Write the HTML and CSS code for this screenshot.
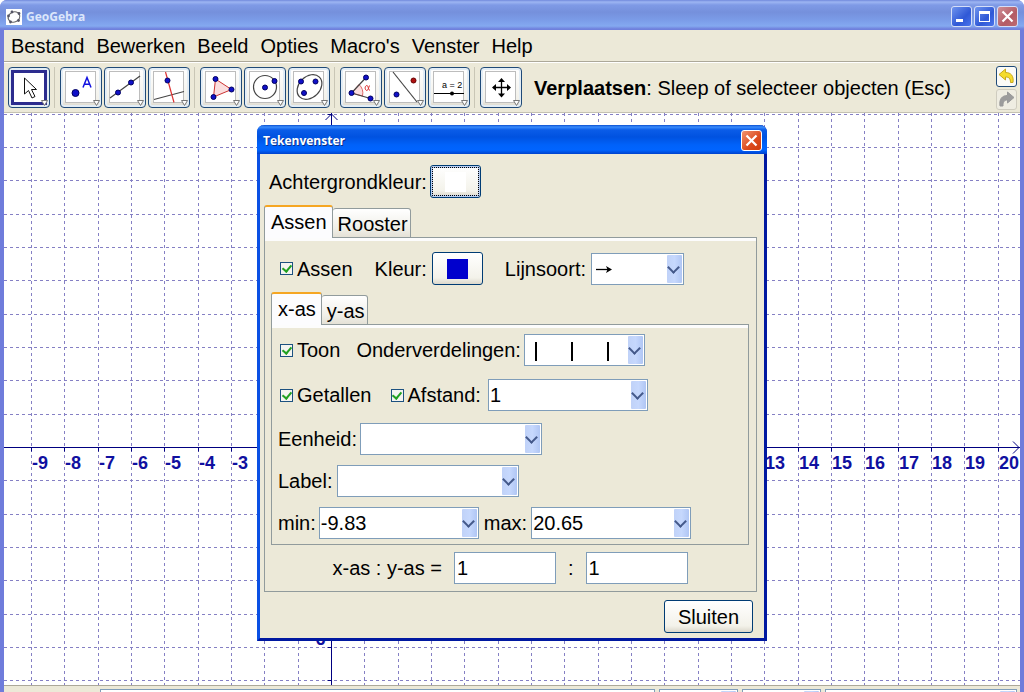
FILE: index.html
```html
<!DOCTYPE html>
<html lang="nl">
<head>
<meta charset="utf-8">
<title>GeoGebra</title>
<link rel="stylesheet" href="styles.css">
</head>
<body>
<div class="window">
  <header class="titlebar">
    <svg class="logo" width="16" height="16" viewBox="0 0 16 16"><rect width="16" height="16" fill="#fff"/><ellipse cx="8" cy="8" rx="6" ry="5" fill="none" stroke="#666" stroke-width="1.1" transform="rotate(-25 8 8)"/><g fill="#556"><circle cx="6" cy="3" r="1.4"/><circle cx="13" cy="4.500" r="1.4"/><circle cx="2.500" cy="7" r="1.4"/><circle cx="4.500" cy="13" r="1.4"/><circle cx="12.500" cy="11.500" r="1.4"/></g></svg>
    <h1 class="title">GeoGebra</h1>
    <div class="winbuttons">
      <button class="winbtn" aria-label="Minimaliseren"><svg width="19" height="19" viewBox="0 0 19 19"><path d="M4 12h7v3H4z" fill="#fff"/></svg></button>
      <button class="winbtn" aria-label="Maximaliseren"><svg width="19" height="19" viewBox="0 0 19 19"><path d="M4 4h11v11H4zM5 7v7h9V7z" fill="#fff" fill-rule="evenodd"/></svg></button>
      <button class="winbtn winbtn-dim" aria-label="Sluiten"><svg width="19" height="19" viewBox="0 0 19 19"><path d="M4.500 4.500l10 10M14.500 4.500l-10 10" stroke="#fff" stroke-width="2.200"/></svg></button>
    </div>
  </header>
  <div class="body">
    <nav class="menubar">
      <button>Bestand</button><button>Bewerken</button><button>Beeld</button><button>Opties</button><button>Macro's</button><button>Venster</button><button>Help</button>
    </nav>
    <div class="toolbar">
      <div class="group">
        <button class="tool tool-active" aria-label="Verplaatsen"><svg viewBox="0 0 40 39"><rect x="3.500" y="3.500" width="33" height="32" fill="#fff" stroke="#2c2c8e" stroke-width="3"/><path d="M15.500 10v16l4-3.500 3.500 7.500 3-1.500-3.500-7h5z" fill="#fff" stroke="#111"/><path class="more" d="M32.500 32.500h6l-3 5z"/></svg></button>
      </div>
      <div class="group">
        <button class="tool" aria-label="Punt"><svg viewBox="0 0 40 39"><rect class="pad" x="4.500" y="3.500" width="30" height="31"/><circle class="dot" cx="14.500" cy="25" r="3.500"/><path d="M22 19.500L26 9.500L30 19.500M23.300 16.300h5.400" fill="none" stroke="#1111e0" stroke-width="1.500"/><path class="more" d="M32.500 32.500h6l-3 5z"/></svg></button>
        <button class="tool" aria-label="Rechte"><svg viewBox="0 0 40 39"><rect class="pad" x="4.500" y="3.500" width="30" height="31"/><path class="ln" d="M5 30L35 8"/><circle class="dot" cx="13" cy="24.500" r="2.500"/><circle class="dot" cx="26" cy="14.500" r="2.500"/><path class="more" d="M32.500 32.500h6l-3 5z"/></svg></button>
        <button class="tool" aria-label="Loodlijn"><svg viewBox="0 0 40 39"><rect class="pad" x="4.500" y="3.500" width="30" height="31"/><path class="ln" d="M5 31.500L35 23.500"/><path d="M16.500 4L25 34.500" stroke="#d33" stroke-width="1.200"/><circle class="dot" cx="18.500" cy="12.500" r="2.500"/><path class="more" d="M32.500 32.500h6l-3 5z"/></svg></button>
      </div>
      <div class="group">
        <button class="tool" aria-label="Veelhoek"><svg viewBox="0 0 40 39"><rect class="pad" x="4.500" y="3.500" width="30" height="31"/><path d="M14.500 11L30.500 21.500L12.500 29z" fill="#fbdede" stroke="#c33"/><circle class="dot" cx="14.500" cy="11" r="2.500"/><circle class="dot" cx="30.500" cy="21.500" r="2.500"/><circle class="dot" cx="12.500" cy="29" r="2.500"/><path class="more" d="M32.500 32.500h6l-3 5z"/></svg></button>
        <button class="tool" aria-label="Cirkel"><svg viewBox="0 0 40 39"><rect class="pad" x="4.500" y="3.500" width="30" height="31"/><circle class="ln" cx="20" cy="19" r="11.500"/><circle class="dot" cx="20" cy="19.500" r="2.500"/><circle class="dot" cx="29.500" cy="13" r="2.500"/><path class="more" d="M32.500 32.500h6l-3 5z"/></svg></button>
        <button class="tool" aria-label="Ellips"><svg viewBox="0 0 40 39"><rect class="pad" x="4.500" y="3.500" width="30" height="31"/><ellipse class="ln" cx="20.500" cy="19" rx="14" ry="10.500" transform="rotate(-45 20.500 19)"/><circle class="dot" cx="12" cy="13.500" r="2.500"/><circle class="dot" cx="26.500" cy="13.500" r="2.500"/><circle class="dot" cx="15" cy="25" r="2.500"/><path class="more" d="M32.500 32.500h6l-3 5z"/></svg></button>
      </div>
      <div class="group">
        <button class="tool" aria-label="Hoek"><svg viewBox="0 0 40 39"><rect class="pad" x="4.500" y="3.500" width="30" height="31"/><path d="M10.500 25L18 16.500Q23 21 21.500 28z" fill="#fbdede" stroke="#d66"/><path class="ln" d="M25 9.500L10.500 25L29.500 30.500"/><circle class="dot" cx="25" cy="9.500" r="2.500"/><circle class="dot" cx="10.500" cy="25" r="2.500"/><circle class="dot" cx="29.500" cy="30.500" r="2.500"/><path d="M28.500 17.500C27.500 20 27 22.500 26 22.500C23.500 22.500 23.500 17.500 26 17.500C27.500 17.500 27 22 29 22.500" fill="none" stroke="#d33"/><path class="more" d="M32.500 32.500h6l-3 5z"/></svg></button>
        <button class="tool" aria-label="Spiegeling"><svg viewBox="0 0 40 39"><rect class="pad" x="4.500" y="3.500" width="30" height="31"/><path class="ln" d="M8 4L32 34"/><circle class="dot" cx="11.500" cy="26.500" r="2.500"/><circle cx="28.500" cy="12.500" r="2.500" fill="#b01010" stroke="#600"/><path class="more" d="M32.500 32.500h6l-3 5z"/></svg></button>
        <button class="tool" aria-label="Schuifknop"><svg viewBox="0 0 40 39"><rect class="pad" x="4.500" y="3.500" width="30" height="31"/><text x="13" y="20" class="slidertext">a = 2</text><path d="M5 25.500h30" stroke="#000"/><circle cx="23" cy="25.500" r="2"/><path class="more" d="M32.500 32.500h6l-3 5z"/></svg></button>
      </div>
      <div class="group">
        <button class="tool" aria-label="Tekenvenster verplaatsen"><svg viewBox="0 0 40 39"><rect class="pad" x="4.500" y="3.500" width="30" height="31"/><path d="M20.500 12v16M12.500 19.500h16" stroke="#000" stroke-width="1.300"/><path d="M20.500 10l3.500 4h-7zM20.500 29.500l3.500-4h-7zM11 19.500l4-3.500v7zM30 19.500l-4-3.500v7z"/><path class="more" d="M32.500 32.500h6l-3 5z"/></svg></button>
      </div>
      <p class="hint"><b>Verplaatsen</b>: Sleep of selecteer objecten (Esc)</p>
      <div class="history">
        <button class="hist" aria-label="Ongedaan maken"><svg width="19" height="19" viewBox="0 0 19 19"><path d="M2 7.500L8.500 2v3.500C14 5.500 17 9 16 15.500h-2.500C13.500 11.500 12 10 8.500 10v3z" fill="#f5dc2e" stroke="#c8a820"/></svg></button>
        <button class="hist hist-off" disabled aria-label="Opnieuw"><svg width="19" height="19" viewBox="0 0 19 19"><path d="M17 7.500L10.500 2v3.500C5 5.500 2 9 3 16h3C6 12 7 10 10.500 10v3z" fill="#9c9c9c" stroke="#999"/></svg></button>
      </div>
    </div>
    <main class="plot"><svg id="grid" role="img" aria-label="Tekenvenster met assen en rooster"></svg></main>
    <footer class="inputbar">
      <input class="command" type="text" aria-label="Invoer">
      <span class="combo w-small"><select aria-label="Teken"><option></option></select></span>
      <span class="combo w-small"><select aria-label="Symbool"><option></option></select></span>
      <span class="combo w-medium"><select aria-label="Opdracht"><option></option></select></span>
    </footer>
  </div>
</div>

<section class="dialog" role="dialog" aria-labelledby="dlg-title">
  <header class="dialog-title">
    <h2 id="dlg-title">Tekenvenster</h2>
    <button class="winbtn winbtn-close" aria-label="Venster sluiten"><svg width="19" height="19" viewBox="0 0 19 19"><path d="M4.500 4.500l10 10M14.500 4.500l-10 10" stroke="#fff" stroke-width="2.200"/></svg></button>
  </header>
  <div class="dialog-body">
    <div class="row row-bg">
      <label class="field" for="bg">Achtergrondkleur: <button id="bg" class="color focused"><span class="swatch white"></span></button></label>
    </div>
    <div class="tabs" role="tablist">
      <button class="tab tab-on" role="tab" aria-selected="true">Assen</button><button class="tab" role="tab" aria-selected="false">Rooster</button>
    </div>
    <div class="panel outer" role="tabpanel">
      <div class="row indent">
        <label class="check"><input type="checkbox" checked>Assen</label>
        <label class="field loose" for="col">Kleur: <button id="col" class="color"><span class="swatch blue"></span></button></label>
        <div class="field loose"><label for="style">Lijnsoort:</label>
          <span class="combo w-style"><select id="style"><option></option></select><svg class="drawn" width="16" height="9" viewBox="0 0 16 9"><path d="M0 4.500h13" stroke="#000" stroke-width="1.300"/><path d="M10 1l6 3.500L10 8l1.500-3.500z"/></svg></span></div>
      </div>
      <div class="tabs" role="tablist">
        <button class="tab tab-on" role="tab" aria-selected="true">x-as</button><button class="tab" role="tab" aria-selected="false">y-as</button>
      </div>
      <div class="panel inner" role="tabpanel">
        <div class="row row-first">
          <label class="check"><input type="checkbox" checked>Toon</label>
          <div class="field tight"><label for="ticks">Onderverdelingen:</label>
            <span class="combo w-ticks"><select id="ticks"><option></option></select><svg class="drawn" width="86" height="19" viewBox="0 0 86 19"><path d="M7 0v19M43 0v19M79 0v19" stroke="#000" stroke-width="2"/></svg></span></div>
        </div>
        <div class="row row-second">
          <label class="check"><input type="checkbox" checked>Getallen</label>
          <div class="field wide"><label class="check"><input type="checkbox" checked>Afstand:</label>
            <span class="combo w-num"><select aria-label="Afstand"><option>1</option></select></span></div>
        </div>
        <div class="row"><div class="field tight"><label for="unit">Eenheid:</label><span class="combo w-long"><select id="unit"><option></option></select></span></div></div>
        <div class="row"><div class="field"><label for="lab">Label:</label><span class="combo w-long"><select id="lab"><option></option></select></span></div></div>
        <div class="row row-range">
          <div class="field tight"><label for="min">min:</label><span class="combo w-num"><select id="min"><option>-9.83</option></select></span></div>
          <div class="field"><label for="max">max:</label><span class="combo w-num"><select id="max"><option>20.65</option></select></span></div>
        </div>
      </div>
      <div class="ratio">
        <label for="rx">x-as : y-as = </label><input id="rx" type="text" value="1"><label for="ry">:</label><input id="ry" type="text" value="1">
      </div>
    </div>
    <div class="actions"><button class="close">Sluiten</button></div>
  </div>
</section>
<script src="grid.js"></script>
</body>
</html>
```
FILE: styles.css
```css
* { box-sizing: border-box; }
body { margin: 0; height: 100vh; overflow: hidden; position: relative; background: #fff; color: #000; font: 20px/24px "Liberation Sans", Arial, sans-serif; }
button, input, select { font: inherit; color: inherit; margin: 0; }
h1, h2, p { margin: 0; }
svg { display: block; }

.window { display: flex; flex-direction: column; height: 100%; background: #6f7cdb; border-radius: 7px 7px 0 0; overflow: hidden; }
.titlebar { flex: none; height: 30px; display: flex; align-items: center; gap: 4px; padding: 3px 6px 0; background: linear-gradient(#7189dc 0, #9db5f2 2px, #7f9ae6 5px, #7590dc 12px, #7b9ce8 20px, #84a9f0 26px, #6f80dc 29px); }
.title, .dialog-title h2 { font: bold 12px/16px "Open Sans", "DejaVu Sans", sans-serif; }
.title { color: #dce6fb; }
.winbuttons { margin-left: auto; display: flex; gap: 2px; }
.winbtn { width: 21px; height: 21px; padding: 0; border: 1px solid #d5def8; border-radius: 3px; background: linear-gradient(135deg, #6f94ee, #2f58d6 60%, #4a74ec); }
.winbtn-dim { background: linear-gradient(135deg, #cf8f96, #b45c66 60%, #bd6a70); }
.winbtn-close { border-color: #fff; background: linear-gradient(135deg, #f0936f, #dc4a1c 60%, #cf3d0c); }

.body { flex: 1; min-height: 0; margin: 0 4px; display: flex; flex-direction: column; background: #ece9d8; }
.menubar { flex: none; height: 32px; display: flex; align-items: center; gap: 12px; padding: 0 7px; border-bottom: 1px solid #aca899; }
.menubar button { border: 0; background: none; padding: 0; }
.toolbar { flex: none; height: 51px; display: flex; align-items: center; padding: 0 3px 0 4px; border-top: 1px solid #fff; border-bottom: 1px solid #c5c2b2; }
.group { display: flex; gap: 2px; }
.group + .group { margin-left: 4px; padding-left: 5px; border-left: 1px solid #c9c6b6; }
.tool { width: 42px; height: 41px; padding: 0; border: 1px solid #1f4a78; border-radius: 4px; background: linear-gradient(#fff, #f2f1ea 80%, #dcd8cc); box-shadow: inset 0 0 0 2px #e3edf5; }
.tool-active { background: #d9dce0; }
.tool svg { width: 40px; height: 39px; }
.pad { fill: #fff; stroke: #bdbdbd; }
.dot { fill: #1010c8; stroke: #000060; }
.ln { fill: none; stroke: #444; stroke-width: 1.200; }
.more { fill: #fff; stroke: #777; }
.slidertext { font: 9px "Liberation Sans", sans-serif; }
.hint { margin-left: 12px; white-space: nowrap; }
.history { margin-left: auto; display: flex; flex-direction: column; gap: 2px; }
.hist { width: 21px; height: 21px; padding: 0; border: 1px solid #1f4a78; border-radius: 3px; background: #fbfbf8; }
.hist-off { border-color: #cfccbf; background: #efede2; }

.plot { flex: 1; min-height: 0; background: #fff; overflow: hidden; }
.plot svg { width: 100%; height: 100%; }
.gridline { stroke: #8580c4; stroke-dasharray: 3 3; }
.axis { stroke: #000080; fill: none; }
.ticklabel { font: bold 18px "Liberation Sans", Arial, sans-serif; fill: #1010a0; }
.inputbar { flex: none; height: 7px; display: flex; gap: 4px; padding: 3px 3px 0 96px; overflow: hidden; border-top: 1px solid #aca899; }
.command { flex: 1; min-width: 0; }

input[type="text"] { height: 32px; padding: 1px 2px; border: 1px solid #7f9db9; border-radius: 0; background: #fff; }
.combo { position: relative; display: block; height: 32px; }
.combo select { appearance: none; display: block; width: 100%; height: 100%; padding: 0 20px 0 1px; border: 1px solid #7f9db9; border-radius: 0; background: #fff; }
.combo::before { content: ""; position: absolute; top: 2px; right: 2px; bottom: 2px; width: 15px; border-radius: 1px; background: linear-gradient(90deg, #c0d2f8, #c6d8fd 50%, #b0c6f4); pointer-events: none; }
.combo::after { content: ""; position: absolute; top: 10px; right: 6px; width: 7px; height: 7px; border: solid #44598a; border-width: 0 2px 2px 0; transform: rotate(45deg); pointer-events: none; }
.drawn { position: absolute; left: 5px; top: 2px; bottom: 0; margin: auto 0; pointer-events: none; }
.w-small { width: 79px; }
.w-medium { width: 192px; }
.w-style { width: 93px; }
.w-ticks { width: 121px; }
.w-num { width: 160px; }
.w-long { width: 182px; }

.dialog { position: absolute; left: 257px; top: 125px; width: 510px; border: solid #0831d9; border-width: 0 3px 3px; border-color: #0a46dc #0018a0 #0018a0 #0a50e4; border-radius: 7px 7px 0 0; background: #ece9d8; }
.dialog-title { height: 29px; margin: 0 -3px; display: flex; align-items: center; justify-content: space-between; padding: 2px 5px 0 6px; border-radius: 7px 7px 0 0; color: #fff; background: linear-gradient(#0a4fd0 0, #3a8cfc 2px, #0a5ce8 5px, #0052e0 12px, #0062fa 20px, #0064ff 25px, #0042cc 29px); }
.dialog-title h2 { text-shadow: 1px 1px #0a2f8c; }
.dialog-body { padding: 11px 7px 2px 4px; }
.row { display: flex; align-items: center; gap: 20px; }
.row-bg { padding: 0 5px; }
.row-bg .field { gap: 3px; }
.field { display: flex; align-items: center; gap: 4px; white-space: nowrap; }
.tight { gap: 3px; }
.loose { gap: 5px; }
.wide { gap: 7px; }
.color { width: 51px; height: 33px; padding: 0; display: grid; place-items: center; border: 1px solid #003c74; border-radius: 3px; background: linear-gradient(#fff, #f3f2ea 80%, #dcd8cc); }
.focused { outline: 1px dotted #000; outline-offset: -3px; box-shadow: inset 0 0 0 2px #b8cdf0; }
.swatch { width: 21px; height: 20px; }
.white { background: #fff; }
.blue { background: #0000cd; }
.tabs { position: relative; display: flex; align-items: flex-end; margin-bottom: -1px; }
.tab { height: 30px; padding: 2px 2px 0 5px; border: 1px solid #919b9c; border-left-width: 0; border-radius: 3px 3px 0 0; background: linear-gradient(#fff, #f0efe8 70%, #e4e1d6); }
.tab-on { height: 33px; padding: 0 5px 2px 6px; border-left-width: 1px; border-top: 2px solid #f5a623; border-bottom: 0; background: #fcfcfe; }
.panel { border: 1px solid #919b9c; box-shadow: inset 0 3px #fcfcfc; }
.outer { padding: 14px 7px 7px 6px; }
.dialog-body > .tabs { margin-top: 7px; }
.indent { padding-left: 9px; gap: 22px; margin-bottom: 7px; }
.inner { padding: 9px 6px 5px; display: flex; flex-direction: column; gap: 10px; }
.check { display: flex; align-items: center; gap: 4px; }
.check input { appearance: none; width: 13px; height: 13px; border: 1px solid #1c5180; background: #f4f4f0; display: grid; place-items: center; }
.check input:checked::before { content: ""; width: 4px; height: 7px; margin-top: -2px; border: solid #21a121; border-width: 0 2px 2px 0; transform: rotate(40deg); }
.row-first { padding-left: 2px; gap: 16px; margin-bottom: 3px; }
.row-second { padding-left: 2px; gap: 19px; margin-bottom: 2px; }
.row-range { gap: 5px; }
.ratio { display: flex; justify-content: center; align-items: center; gap: 12px; margin-top: 7px; }
.ratio input { width: 102px; }
.actions { display: flex; justify-content: flex-end; padding: 8px 4px 3px; }
.close { width: 89px; height: 33px; padding: 0; border: 1px solid #003c74; border-radius: 3px; background: linear-gradient(#fff, #f3f2ea 80%, #dcd8cc); }
```
FILE: grid.js
```js
const svg = document.getElementById('grid');
const unit = 33.34;
const origin = { x: 327, y: 334 };

function add(name, attrs, text) {
  const el = document.createElementNS('http://www.w3.org/2000/svg', name);
  for (const key in attrs) el.setAttribute(key, attrs[key]);
  if (text) el.textContent = text;
  svg.appendChild(el);
}

function draw() {
  svg.replaceChildren();
  const w = svg.clientWidth, h = svg.clientHeight;
  const px = n => Math.round(origin.x + n * unit) + 0.5;
  const py = n => Math.round(origin.y - n * unit) + 0.5;
  const first = Math.ceil(-origin.x / unit), last = Math.floor((w - origin.x) / unit);
  const top = Math.floor(origin.y / unit), bottom = Math.ceil((origin.y - h) / unit);
  for (let n = first; n <= last; n++) {
    if (n) add('path', { class: 'gridline', d: `M${px(n)} 0V${h}` });
    add('path', { class: 'axis', d: `M${px(n)} ${py(0)}v4` });
  }
  for (let n = bottom; n <= top; n++) {
    if (n) add('path', { class: 'gridline', d: `M0 ${py(n)}H${w}` });
    add('path', { class: 'axis', d: `M${px(0)} ${py(n)}h-4` });
  }
  add('path', { class: 'axis', d: `M0 ${py(0)}H${w}M${w - 7} ${py(0) - 6}l6 6l-6 6` });
  add('path', { class: 'axis', d: `M${px(0)} ${h}V0M${px(0) - 6} 7l6 -6l6 6` });
  for (const n of [-9, -8, -7, -6, -5, -4, -3, 13, 14, 15, 16, 17, 18, 19, 20]) {
    add('text', { class: 'ticklabel', x: px(n) + 0.5, y: py(0) + 21.5 }, String(n));
  }
  add('text', { class: 'ticklabel', x: px(0) - 22, y: py(-6) - 3 }, '-6');
}

draw();
addEventListener('resize', draw);
```
